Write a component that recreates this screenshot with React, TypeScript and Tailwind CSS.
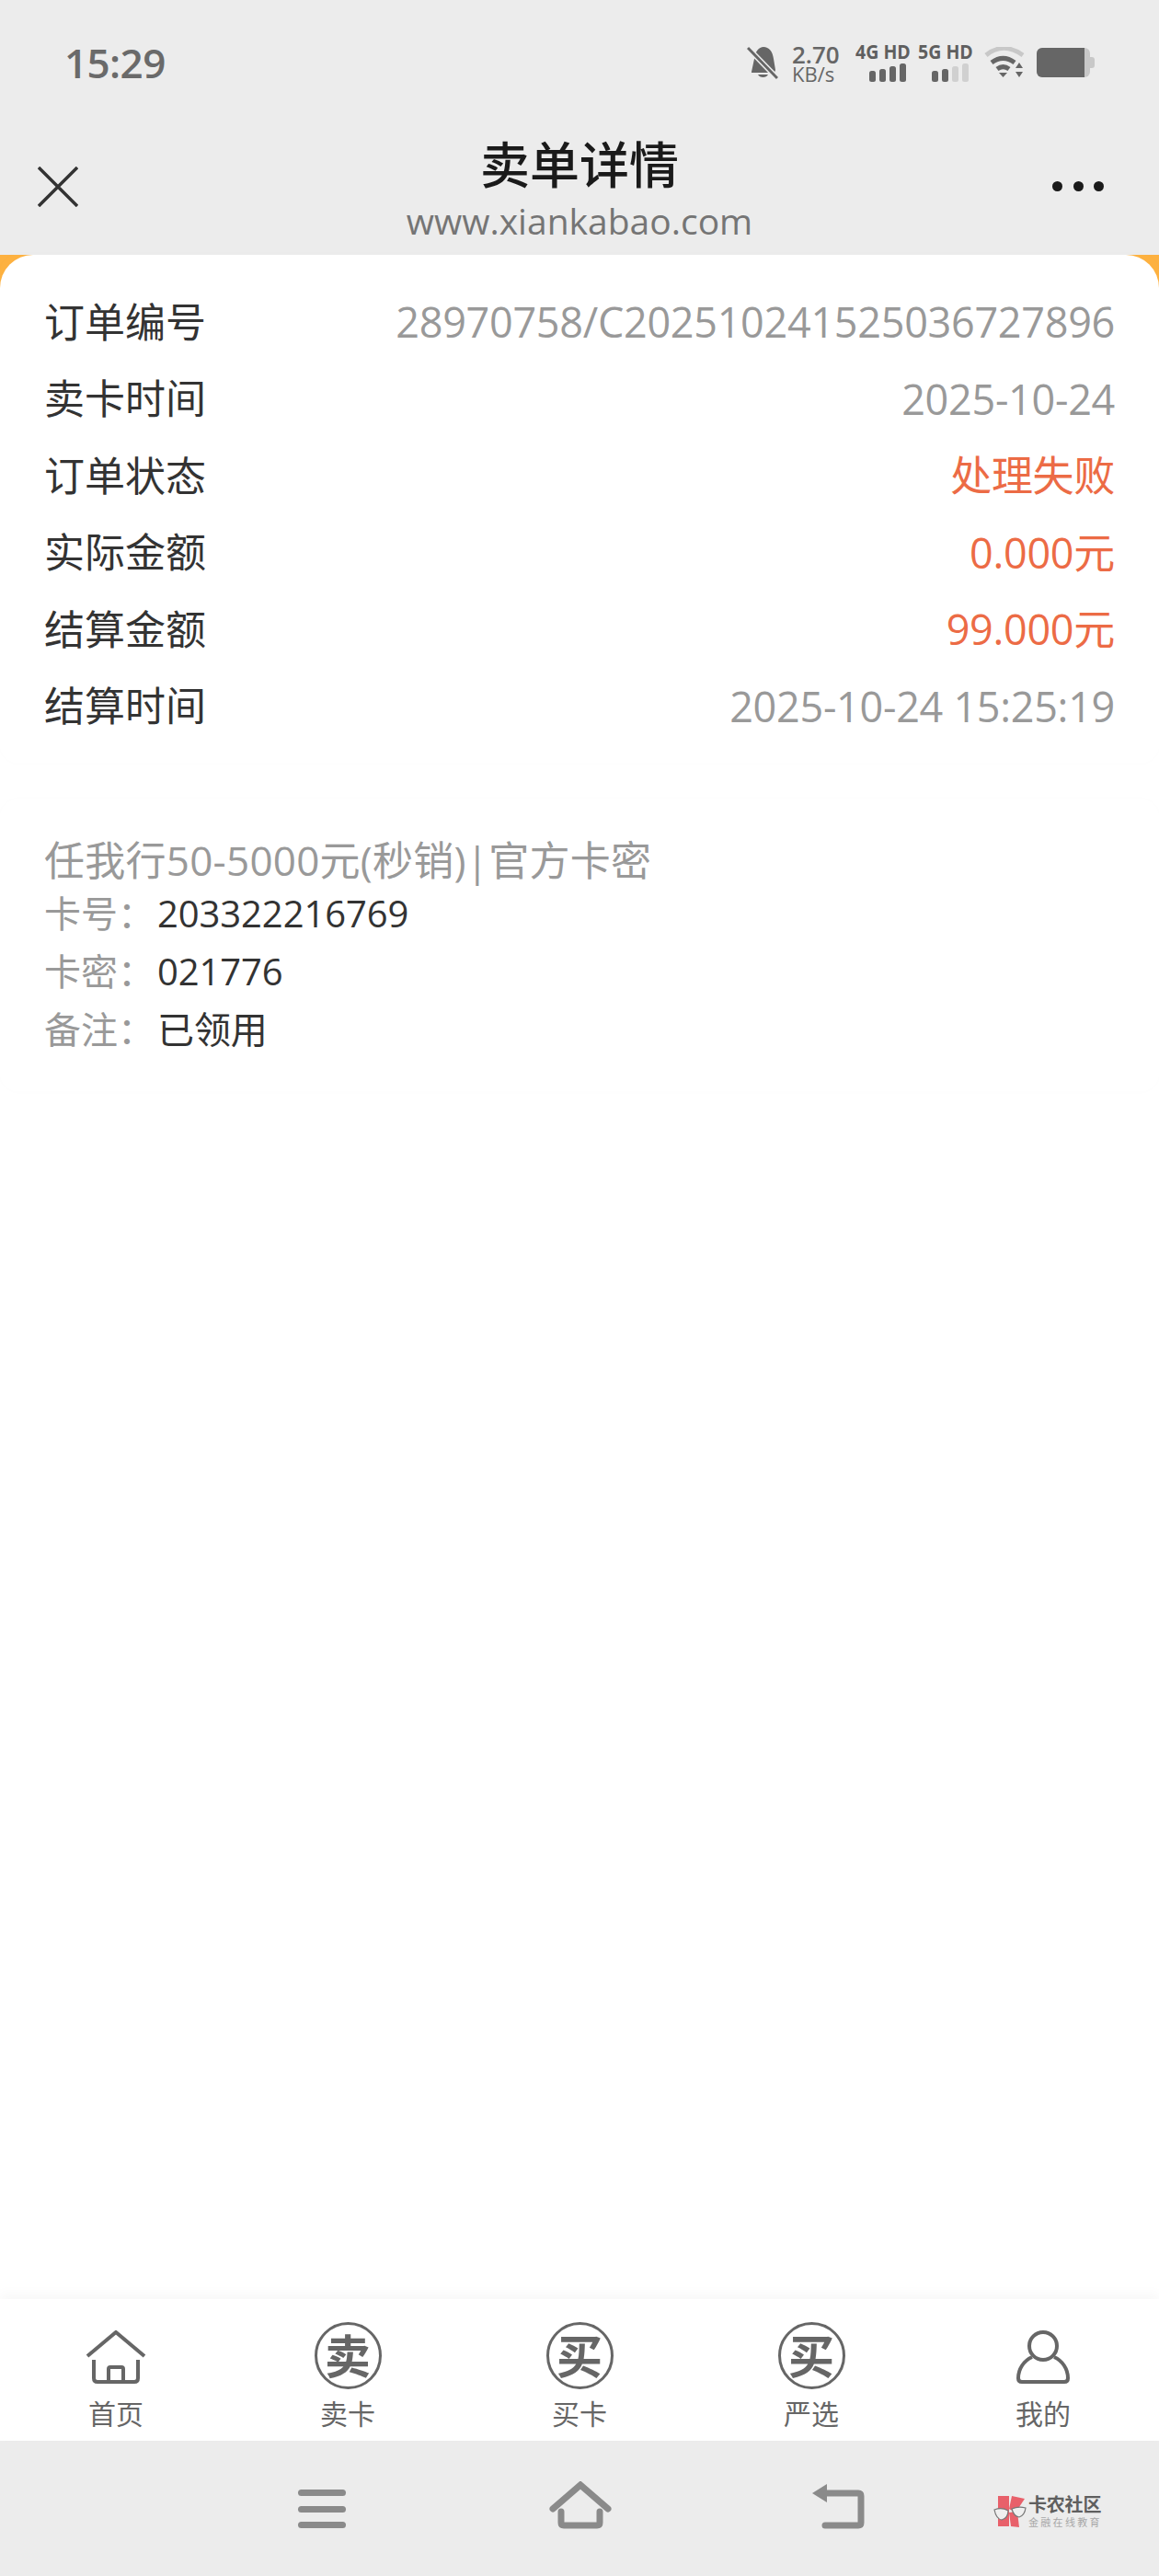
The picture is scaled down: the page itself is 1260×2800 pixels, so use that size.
import React from 'react';

const FONT = "font-['Open_Sans','Noto_Sans_CJK_SC',sans-serif]";

const orderRows = [
  { label: '订单编号', value: '28970758/C202510241525036727896', red: false },
  { label: '卖卡时间', value: '2025-10-24', red: false },
  { label: '订单状态', value: '处理失败', red: true },
  { label: '实际金额', value: '0.000元', red: true },
  { label: '结算金额', value: '99.000元', red: true },
  { label: '结算时间', value: '2025-10-24 15:25:19', red: false },
];

const cardRows = [
  { label: '卡号：', value: '203322216769' },
  { label: '卡密：', value: '021776' },
  { label: '备注：', value: '已领用' },
];

const SignalBars = ({ active }: { active: number }) => (
  <svg width="42" height="20" viewBox="0 0 42 20">
    {[
      { x: 0, y: 8, h: 12 },
      { x: 11, y: 6, h: 14 },
      { x: 22, y: 3, h: 17 },
      { x: 33, y: 0, h: 20 },
    ].map((b, i) => (
      <rect key={i} x={b.x} y={b.y} width="7" height={b.h} rx="2.5" fill={i < active ? '#666666' : '#d0d0d0'} />
    ))}
  </svg>
);

const NetBlock = ({ label, active }: { label: string; active: number }) => (
  <div className="flex w-[57px] flex-col items-end">
    <span className="w-full origin-left scale-x-[0.93] text-[21px] leading-[19px] font-bold whitespace-nowrap text-[#5f5f5f]">
      {label}
    </span>
    <div className="mt-[3px]">
      <SignalBars active={active} />
    </div>
  </div>
);

const StatusBar = () => (
  <div className="mb-[54px] flex h-[50px] items-center justify-between pr-[70px] pl-[70px]">
    <span className="text-[44px] leading-none font-semibold tracking-[-0.6px] text-[#6a6a6a]">15:29</span>
    <div className="flex items-center">
      <svg width="34" height="38" viewBox="0 0 34 38" className="mr-[15px]">
        <path d="M5 29 8 15C9 7 13 2 18 2c6 0 10 5 11 13l2 12-1 3H5z" fill="#666666" />
        <path d="M12 32a6 5 0 0 0 11 0z" fill="#666666" />
        <path d="M1 3 33 36" stroke="#ececec" strokeWidth="6" />
        <path d="M1 3 33 36" stroke="#666666" strokeWidth="3" />
      </svg>
      <div className="mr-[16px] flex w-[53px] flex-col">
        <span className="text-[26px] leading-[24px] font-semibold text-[#666666]">2.70</span>
        <span className="text-[22px] leading-[18px] font-medium text-[#666666]">KB/s</span>
      </div>
      <div className="mr-[11px]">
        <NetBlock label="4G HD" active={4} />
      </div>
      <div className="mr-[15px]">
        <NetBlock label="5G HD" active={2} />
      </div>
      <svg width="44" height="34" viewBox="0 0 44 34" className="mr-[13px]">
        <path d="M2 9C14-1 28-1 42 9" fill="none" stroke="#c8c8c8" strokeWidth="5" />
        <path d="M8 17c8-6 17-6 25 0" fill="none" stroke="#666666" strokeWidth="5" />
        <path d="M14 24c4-3 9-3 13 0" fill="none" stroke="#666666" strokeWidth="5" />
        <path d="M16 28h9l-4.500 5z" fill="#666666" />
        <path d="M38 17l4 6h-8zM38 33l-4-6h8z" fill="#666666" />
      </svg>
      <svg width="63" height="32" viewBox="0 0 63 32">
        <rect x="0" y="0" width="58" height="32" rx="6" fill="#c8c8c8" />
        <path d="M6 0h46v32H6a6 6 0 0 1-6-6V6a6 6 0 0 1 6-6z" fill="#666666" />
        <path d="M58 10h2a3 3 0 0 1 3 3v6a3 3 0 0 1-3 3h-2z" fill="#c8c8c8" />
      </svg>
    </div>
  </div>
);

const Header = () => (
  <header className="h-[277px] shrink-0 bg-[#ececec] pt-[43px]">
    <StatusBar />
    <div className="grid grid-cols-[1fr_auto_1fr] items-start px-[41px]">
      <svg width="44" height="44" viewBox="0 0 44 44" className="mt-[34px]">
        <path d="M1 1 43 43M43 1 1 43" stroke="#333333" strokeWidth="3.500" />
      </svg>
      <div className="flex flex-col items-center">
        <h1 className="text-[54px] leading-[64px] font-medium text-[#1a1a1a]">卖单详情</h1>
        <span className="mt-[4px] text-[39px] leading-[50px] text-[#757575]">www.xiankabao.com</span>
      </div>
      <div className="mt-[50px] mr-[19px] flex h-[11px] w-[56px] justify-between justify-self-end">
        <span className="h-[11px] w-[11px] rounded-full bg-[#1a1a1a]" />
        <span className="h-[11px] w-[11px] rounded-full bg-[#1a1a1a]" />
        <span className="h-[11px] w-[11px] rounded-full bg-[#1a1a1a]" />
      </div>
    </div>
  </header>
);

const StampIcon = ({ char }: { char: string }) => (
  <div className="flex h-[73px] w-[73px] items-center justify-center rounded-full border-[3px] border-[#666666] bg-white">
    <span className="text-[50px] leading-none font-bold text-[#666666]">{char}</span>
  </div>
);

const HomeIcon = () => (
  <svg width="66" height="58" viewBox="0 0 66 58" fill="none" stroke="#666666">
    <path d="M2 28 33 2l31 26" strokeWidth="4" />
    <path d="M9 32v20q0 4 4 4h40q4 0 4-4V32M25 55V42q0-2 2-2h12q2 0 2 2v13" strokeWidth="4" />
  </svg>
);

const PersonIcon = () => (
  <svg width="58" height="58" viewBox="0 0 58 58" fill="none" stroke="#666666" strokeWidth="4">
    <ellipse cx="29" cy="17" rx="15" ry="15" />
    <path d="M17 29C8 33 2 42 2 52q0 4 4 4h46q4 0 4-4c0-10-6-19-15-23" />
  </svg>
);

const tabs = [
  { label: '首页', icon: <HomeIcon /> },
  { label: '卖卡', icon: <StampIcon char="卖" /> },
  { label: '买卡', icon: <StampIcon char="买" /> },
  { label: '严选', icon: <StampIcon char="买" /> },
  { label: '我的', icon: <PersonIcon /> },
];

const TabBar = () => (
  <nav className="z-10 grid h-[154px] shrink-0 grid-cols-5 bg-white shadow-[0_-6px_12px_rgba(0,0,0,0.03)]">
    {tabs.map((t) => (
      <div key={t.label} className="flex flex-col items-center pt-[25px]">
        <div className="flex h-[73px] items-end pb-[6px] [&>div]:-mb-[6px]">{t.icon}</div>
        <span className="mt-[9px] text-[30px] leading-[36px] text-[#666666]">{t.label}</span>
      </div>
    ))}
  </nav>
);

const SystemNav = () => (
  <div className="flex h-[147px] shrink-0 items-start bg-[#ececec]">
    <div className="mt-[53px] ml-[324px] flex h-[42px] w-[52px] flex-col justify-between">
      <span className="h-[7px] rounded-full bg-[#8a8a8a]" />
      <span className="h-[7px] rounded-full bg-[#8a8a8a]" />
      <span className="h-[7px] rounded-full bg-[#8a8a8a]" />
    </div>
    <svg width="68" height="52" viewBox="0 0 68 52" fill="none" stroke="#8a8a8a" strokeWidth="7" strokeLinecap="round" className="mt-[44px] ml-[221px]">
      <path d="M4 30 34 4l30 26" />
      <path d="M13 33v12q0 3 3 3h36q3 0 3-3V33" />
    </svg>
    <svg width="58" height="50" viewBox="0 0 58 50" fill="none" className="mt-[46px] ml-[217px]">
      <path d="M14 11h37q3 0 3 3v29q0 3-3 3H15" stroke="#8a8a8a" strokeWidth="7" strokeLinecap="round" />
      <path d="M1 11 17 1v20z" fill="#8a8a8a" />
    </svg>
    <div className="mt-[60px] ml-[140px] flex items-start">
      <svg width="36" height="36" viewBox="0 0 36 36">
        <path d="M5 0h12v33H5z" fill="#e8606a" />
        <path d="M20 0 34 3 24 18 17 14z" fill="#e8606a" />
        <path d="M17 18l9-1 2 17-9-1z" fill="#e8606a" />
        <path d="M1 15q8-3 15 1 0 8-7 10Q3 25 1 15zM20 14q7-3 15-1-1 8-7 10-6-1-8-9z" fill="#efefef" stroke="#777777" strokeWidth="1.200" />
      </svg>
      <div className="ml-[2px] flex flex-col">
        <span className="text-[20px] leading-[20px] font-bold tracking-[-0.2px] whitespace-nowrap text-[#5f5f5f]">卡农社区</span>
        <span className="mt-[2px] text-[11px] leading-[13px] tracking-[2.300px] whitespace-nowrap text-[#a8a8a8]">金融在线教育</span>
      </div>
    </div>
  </div>
);

export default function App() {
  return (
    <div className={`flex h-[2800px] w-[1260px] flex-col overflow-hidden bg-white ${FONT}`}>
      <Header />
      <main className="min-h-0 flex-1 bg-[#fdb140]">
        <div className="h-full rounded-t-[36px] bg-white">
          <section className="rounded-[20px] px-[48px] pt-[31px] pb-[20px] shadow-[0_0_16px_rgba(0,0,0,0.012)]">
            {orderRows.map((r) => (
              <div key={r.label} className="flex h-[83.500px] items-center justify-between text-[44px] leading-none">
                <span className="text-[#333333]">{r.label}</span>
                <span className={`text-[45px] tracking-[-0.3px] ${r.red ? 'text-[#ec6b45]' : 'text-[#999999]'}`}>{r.value}</span>
              </div>
            ))}
          </section>
          <section className="mt-[40px] rounded-[20px] px-[48px] pt-[40px] pb-[36px] shadow-[0_0_16px_rgba(0,0,0,0.012)]">
            <div className="text-[44px] leading-[52px] tracking-[0.25px] text-[#999999]">任我行50-5000元(秒销)|官方卡密</div>
            {cardRows.map((r) => (
              <div key={r.label} className="flex h-[63px] items-center text-[40px] leading-none">
                <span className="w-[123px] text-[#999999]">{r.label}</span>
                <span className="tracking-[-0.1px] text-[#333333]">{r.value}</span>
              </div>
            ))}
          </section>
        </div>
      </main>
      <TabBar />
      <SystemNav />
    </div>
  );
}
